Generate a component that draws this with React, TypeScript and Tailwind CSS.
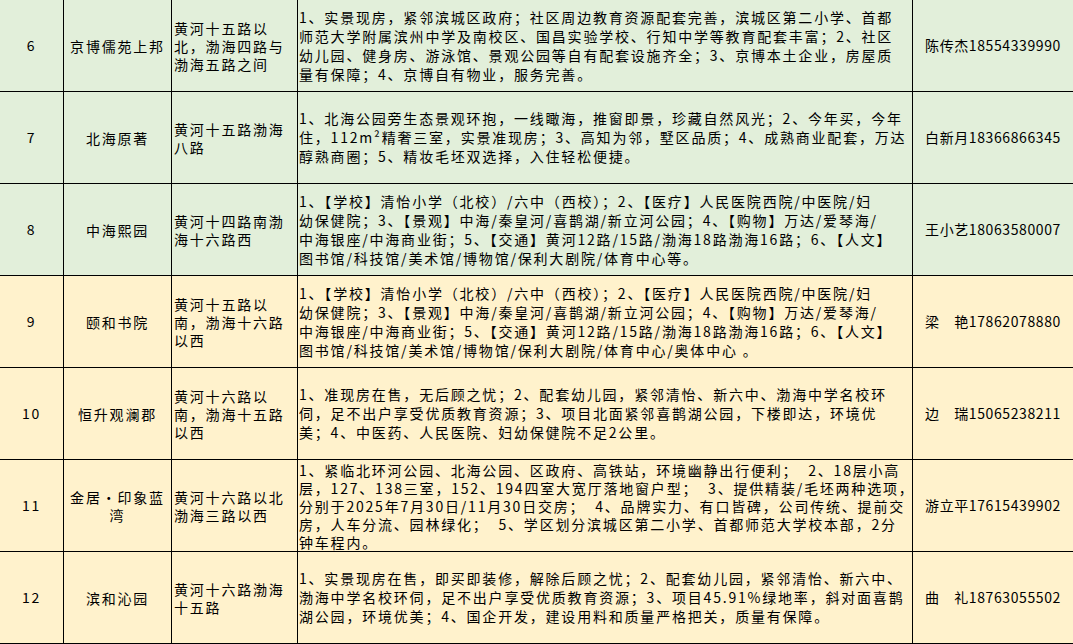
type Row = {
  no: string;
  name: string[];
  loc: string[];
  desc: string[];
  contact: string;
  tone: "green" | "yellow";
};

const ROWS: Row[] = [
  {
    no: "6",
    name: ["京博儒苑上邦"],
    loc: ["黄河十五路以", "北，渤海四路与", "渤海五路之间"],
    desc: [
      "1、实景现房，紧邻滨城区政府；社区周边教育资源配套完善，滨城区第二小学、首都",
      "师范大学附属滨州中学及南校区、国昌实验学校、行知中学等教育配套丰富；2、社区",
      "幼儿园、健身房、游泳馆、景观公园等自有配套设施齐全；3、京博本土企业，房屋质",
      "量有保障；4、京博自有物业，服务完善。",
    ],
    contact: "陈传杰18554339990",
    tone: "green",
  },
  {
    no: "7",
    name: ["北海原著"],
    loc: ["黄河十五路渤海", "八路"],
    desc: [
      "1、北海公园旁生态景观环抱，一线瞰海，推窗即景，珍藏自然风光；2、今年买，今年",
      "住，112m²精奢三室，实景准现房；3、高知为邻，墅区品质；4、成熟商业配套，万达",
      "醇熟商圈；5、精妆毛坯双选择，入住轻松便捷。",
    ],
    contact: "白新月18366866345",
    tone: "green",
  },
  {
    no: "8",
    name: ["中海熙园"],
    loc: ["黄河十四路南渤", "海十六路西"],
    desc: [
      "1、【学校】清怡小学（北校）/六中（西校）；2、【医疗】人民医院西院/中医院/妇",
      "幼保健院；3、【景观】中海/秦皇河/喜鹊湖/新立河公园；4、【购物】万达/爱琴海/",
      "中海银座/中海商业街；5、【交通】黄河12路/15路/渤海18路渤海16路；6、【人文】",
      "图书馆/科技馆/美术馆/博物馆/保利大剧院/体育中心等。",
    ],
    contact: "王小艺18063580007",
    tone: "green",
  },
  {
    no: "9",
    name: ["颐和书院"],
    loc: ["黄河十五路以", "南，渤海十六路", "以西"],
    desc: [
      "1、【学校】清怡小学（北校）/六中（西校）；2、【医疗】人民医院西院/中医院/妇",
      "幼保健院；3、【景观】中海/秦皇河/喜鹊湖/新立河公园；4、【购物】万达/爱琴海/",
      "中海银座/中海商业街；5、【交通】黄河12路/15路/渤海18路渤海16路；6、【人文】",
      "图书馆/科技馆/美术馆/博物馆/保利大剧院/体育中心/奥体中心 。",
    ],
    contact: "梁　艳17862078880",
    tone: "yellow",
  },
  {
    no: "10",
    name: ["恒升观澜郡"],
    loc: ["黄河十六路以", "南，渤海十五路", "以西"],
    desc: [
      "1、准现房在售，无后顾之忧；2、配套幼儿园，紧邻清怡、新六中、渤海中学名校环",
      "伺，足不出户享受优质教育资源；3、项目北面紧邻喜鹊湖公园，下楼即达，环境优",
      "美；4、中医药、人民医院、妇幼保健院不足2公里。",
    ],
    contact: "边　瑞15065238211",
    tone: "yellow",
  },
  {
    no: "11",
    name: ["金居•印象蓝", "湾"],
    loc: ["黄河十六路以北", "渤海三路以西"],
    desc: [
      "1、紧临北环河公园、北海公园、区政府、高铁站，环境幽静出行便利；  2、18层小高",
      "层，127、138三室，152、194四室大宽厅落地窗户型；  3、提供精装/毛坯两种选项，",
      "分别于2025年7月30日/11月30日交房；  4、品牌实力、有口皆碑，公司传统、提前交",
      "房，人车分流、园林绿化；  5、学区划分滨城区第二小学、首都师范大学校本部，2分",
      "钟车程内。",
    ],
    contact: "游立平17615439902",
    tone: "yellow",
  },
  {
    no: "12",
    name: ["滨和沁园"],
    loc: ["黄河十六路渤海", "十五路"],
    desc: [
      "1、实景现房在售，即买即装修，解除后顾之忧；2、配套幼儿园，紧邻清怡、新六中、",
      "渤海中学名校环伺，足不出户享受优质教育资源；3、项目45.91%绿地率，斜对面喜鹊",
      "湖公园，环境优美；4、国企开发，建设用料和质量严格把关，质量有保障。",
    ],
    contact: "曲　礼18763055502",
    tone: "yellow",
  },
];

const TONE_BG: Record<Row["tone"], string> = {
  green: "bg-[#e2efda]",
  yellow: "bg-[#fff2cc]",
};

export default function App() {
  return (
    <div className="w-[1073px] h-[644px] overflow-hidden bg-white text-black font-['Noto_Sans_CJK_SC','Noto_Sans',sans-serif] text-[14px] tracking-[1.8px]">
      <div className="-mt-px border-b border-black">
        {ROWS.map((r) => (
          <TableRow key={r.no} row={r} />
        ))}
      </div>
    </div>
  );
}

function TableRow({ row }: { row: Row }) {
  // five-line cells are packed a bit tighter so the last line stays inside the row
  const descLeading = row.desc.length > 4 ? "leading-[18px]" : "leading-[19px]";
  return (
    <div
      className={`grid grid-cols-[64px_108px_126px_615px_1fr] h-[92px] border-t border-black overflow-hidden ${TONE_BG[row.tone]}`}
    >
      <div className="flex items-center justify-center border-r border-black">{row.no}</div>
      <div className="flex flex-col items-center justify-center border-r border-black leading-[18px]">
        {row.name.map((n) => (
          <span key={n} className="whitespace-nowrap">
            {n}
          </span>
        ))}
      </div>
      <div className="flex flex-col justify-center border-r border-black pl-[2px] leading-[18px]">
        {row.loc.map((l) => (
          <span key={l} className="whitespace-nowrap">
            {l}
          </span>
        ))}
      </div>
      <div className={`flex flex-col justify-center border-r border-black pl-[1px] ${descLeading}`}>
        {row.desc.map((d) => (
          <span key={d} className="whitespace-pre">
            {d}
          </span>
        ))}
      </div>
      <div className="flex items-center justify-center whitespace-nowrap tracking-[0.6px]">{row.contact}</div>
    </div>
  );
}
